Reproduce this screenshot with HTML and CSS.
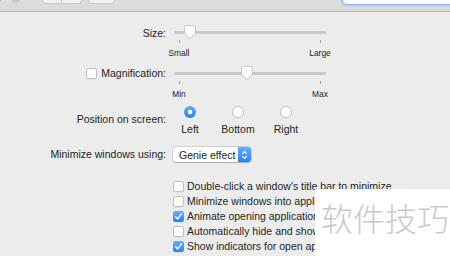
FILE: index.html
```html
<!DOCTYPE html>
<html lang="en">
<head>
    <meta charset="UTF-8">
    <title>Dock</title>
    <link rel="stylesheet" href="styles.css">
</head>
<body>
    <div class="toolbar">
        <div class="lights">
            <span class="light light-min"></span>
            <span class="light light-zoom"></span>
        </div>
        <div class="nav-group">
            <button class="tb-btn">&#8249;</button>
            <button class="tb-btn">&#8250;</button>
        </div>
        <button class="tb-btn grid-btn">
            <svg width="16" height="12" viewBox="0 0 16 12">
                <g fill="#4a4a4a">
                    <rect x="0" y="0" width="3" height="2.5"/><rect x="4.3" y="0" width="3" height="2.5"/><rect x="8.6" y="0" width="3" height="2.5"/><rect x="12.9" y="0" width="3" height="2.5"/>
                    <rect x="0" y="4.5" width="3" height="2.5"/><rect x="4.3" y="4.5" width="3" height="2.5"/><rect x="8.6" y="4.5" width="3" height="2.5"/><rect x="12.9" y="4.5" width="3" height="2.5"/>
                    <rect x="0" y="9" width="3" height="2.5"/><rect x="4.3" y="9" width="3" height="2.5"/><rect x="8.6" y="9" width="3" height="2.5"/><rect x="12.9" y="9" width="3" height="2.5"/>
                </g>
            </svg>
        </button>
        <div class="title">Dock</div>
        <div class="search">
            <svg width="9" height="9" viewBox="0 0 9 9"><circle cx="3.6" cy="3.6" r="2.8" fill="none" stroke="#777" stroke-width="1.1"/><path d="M5.6 5.6 8.3 8.3" stroke="#777" stroke-width="1.3"/></svg>
            <span class="caret"></span>
            <span class="search-text">Search</span>
        </div>
    </div>

    <div class="prefs">
        <div class="row row-size">
            <div class="row-label">Size:</div>
            <div class="slider-block">
                <div class="slider">
                    <div class="track"></div>
                    <svg class="knob" style="left: 10px" width="12" height="14" viewBox="0 0 12 14"><path d="M1.8 .6h8.4a1.2 1.2 0 0 1 1.2 1.2v6.6L6 13.4 .6 8.4V1.8a1.2 1.2 0 0 1 1.2-1.2z" fill="#fff" stroke="#b9b9b9" stroke-width=".7"/></svg>
                </div>
                <div class="scale">
                    <div class="mark"><span class="tick"></span><span class="mark-label">Small</span></div>
                    <div class="mark"><span class="tick"></span><span class="mark-label">Large</span></div>
                </div>
            </div>
        </div>

        <div class="row row-magnify">
            <div class="row-label"><span class="checkbox"></span>Magnification:</div>
            <div class="slider-block">
                <div class="slider">
                    <div class="track"></div>
                    <svg class="knob" style="left: 67px" width="12" height="14" viewBox="0 0 12 14"><path d="M1.8 .6h8.4a1.2 1.2 0 0 1 1.2 1.2v6.6L6 13.4 .6 8.4V1.8a1.2 1.2 0 0 1 1.2-1.2z" fill="#fff" stroke="#b9b9b9" stroke-width=".7"/></svg>
                </div>
                <div class="scale">
                    <div class="mark"><span class="tick"></span><span class="mark-label">Min</span></div>
                    <div class="mark"><span class="tick"></span><span class="mark-label">Max</span></div>
                </div>
            </div>
        </div>

        <div class="row row-position">
            <div class="row-label">Position on screen:</div>
            <div class="radio-group">
                <div class="radio-opt"><span class="radio selected"></span><span class="radio-label">Left</span></div>
                <div class="radio-opt"><span class="radio"></span><span class="radio-label">Bottom</span></div>
                <div class="radio-opt"><span class="radio"></span><span class="radio-label">Right</span></div>
            </div>
        </div>

        <div class="row row-minimize">
            <div class="row-label">Minimize windows using:</div>
            <div class="popup">
                <span class="popup-text">Genie effect</span>
                <span class="stepper">
                    <svg width="7" height="10" viewBox="0 0 7 10"><path d="M1.2 3.8 3.5 1.5 5.8 3.8M1.2 6.2 3.5 8.5 5.8 6.2" fill="none" stroke="#fff" stroke-width="1.1"/></svg>
                </span>
            </div>
        </div>

        <ul class="options">
            <li><span class="checkbox"></span>Double-click a window's title bar to minimize</li>
            <li><span class="checkbox"></span>Minimize windows into application icon</li>
            <li><span class="checkbox checked"></span>Animate opening applications</li>
            <li><span class="checkbox"></span>Automatically hide and show the Dock</li>
            <li><span class="checkbox checked"></span>Show indicators for open applications</li>
        </ul>
    </div>

    <div class="watermark">软件技巧</div>
</body>
</html>
```

FILE: styles.css
```css
* {
    margin: 0;
    padding: 0;
    box-sizing: border-box;
}

body {
    width: 450px;
    height: 256px;
    overflow: hidden;
    position: relative;
    background-color: #ececec;
    font-family: "Liberation Sans", Arial, sans-serif;
    font-size: 10.5px;
    color: #242424;
}

/* toolbar, cropped at the top */
.toolbar {
    height: 39px;
    margin-top: -27px;
    display: flex;
    align-items: flex-end;
    padding-bottom: 7px;
    background: linear-gradient(#e9e9e9, #d9d9d9);
    border-bottom: 1px solid #bcbcbc;
}

.lights {
    display: flex;
    gap: 7px;
    margin-left: -9px;
    margin-bottom: 2px;
}

.light {
    width: 12px;
    height: 12px;
    border-radius: 50%;
}

.light-min {
    background: #f5be4f;
    border: 1px solid #dea236;
}

.light-zoom {
    background: #d0d0d0;
    border: 1px solid #b9b9b9;
}

.nav-group {
    display: flex;
    margin-left: 20px;
}

.tb-btn {
    height: 22px;
    width: 20px;
    background: linear-gradient(#fdfdfd, #f1f1f1);
    border: 1px solid #c6c6c6;
    border-radius: 4px;
    font-family: "Liberation Sans", Arial, sans-serif;
    font-size: 16px;
    color: #4a4a4a;
}

.nav-group .tb-btn:first-child {
    border-radius: 4px 0 0 4px;
}

.nav-group .tb-btn:last-child {
    border-radius: 0 4px 4px 0;
    border-left: none;
}

.grid-btn {
    width: 27px;
    margin-left: 6px;
    display: flex;
    align-items: flex-end;
    justify-content: center;
    padding-bottom: 3px;
}

.title {
    flex: 1;
    text-align: center;
    font-size: 13px;
    line-height: 13px;
    color: #4d4d4d;
    margin-bottom: 2px;
}

.search {
    width: 112px;
    height: 22px;
    margin-right: -5px;
    display: flex;
    align-items: center;
    gap: 3px;
    padding-left: 7px;
    background: #fff;
    border-radius: 4px;
    box-shadow: 0 0 0 1px #8fb6ec, 0 0 0 2.5px #b3cff4;
}

.caret {
    width: 1px;
    height: 11px;
    background: #222;
}

.search-text {
    color: #a8a8a8;
    font-size: 12px;
}

/* preferences */
.row {
    display: flex;
}

.row-label {
    width: 166px;
    flex-shrink: 0;
    display: flex;
    justify-content: flex-end;
    align-items: center;
    gap: 4px;
    line-height: 14px;
    height: 14px;
}

.row-size {
    margin-top: 13px;
}

.row-size .row-label {
    padding-top: 1px;
}

.row-magnify {
    margin-top: 8px;
}

.slider-block {
    width: 152px;
    margin-left: 8px;
}

.slider {
    position: relative;
    height: 14px;
    padding-top: 6px;
}

.track {
    height: 3px;
    border-radius: 2px;
    background: #c9c9c9;
}

.knob {
    position: absolute;
    top: 0;
    filter: drop-shadow(0 0.5px 0.5px rgba(0, 0, 0, 0.15));
}

.scale {
    display: flex;
    justify-content: space-between;
    margin: 1px -9px 0 -10px;
}

.mark {
    width: 30px;
    display: flex;
    flex-direction: column;
    align-items: center;
}

.tick {
    width: 1px;
    height: 3px;
    background: #9c9c9c;
}

.mark-label {
    font-size: 8.4px;
    line-height: 10px;
    margin-top: 5px;
}

.checkbox {
    width: 11px;
    height: 11px;
    flex-shrink: 0;
    background: #fff;
    border: 1px solid #bdbdbd;
    border-radius: 2.5px;
    box-shadow: 0 0.5px 0.5px rgba(0, 0, 0, 0.08);
}

.checkbox.checked {
    border: none;
    background: no-repeat center / 11px 11px url("data:image/svg+xml,%3Csvg xmlns='http://www.w3.org/2000/svg' viewBox='0 0 11 11'%3E%3Cpath d='M2.6 5.8 4.6 7.9 8.5 2.9' fill='none' stroke='white' stroke-width='1.5' stroke-linecap='round' stroke-linejoin='round'/%3E%3C/svg%3E"), linear-gradient(#68b0fb, #2c80f4);
}

.row-position {
    margin-top: 7px;
}

.row-position .row-label {
    padding-top: 6px;
    height: 20px;
}

.radio-group {
    display: flex;
}

.radio-opt {
    width: 48px;
    display: flex;
    flex-direction: column;
    align-items: center;
}

.radio {
    width: 12px;
    height: 12px;
    border-radius: 50%;
    background: #fff;
    border: 1px solid #c2c2c2;
    box-shadow: 0 0.5px 0.5px rgba(0, 0, 0, 0.08);
}

.radio.selected {
    border: none;
    background: radial-gradient(circle, #fff 0 2px, transparent 2.6px), linear-gradient(#66aefb, #2d80f4);
}

.radio-label {
    line-height: 14px;
    margin-top: 4px;
}

.row-minimize {
    margin-top: 11px;
}

.row-minimize .row-label {
    height: 15px;
    line-height: 15px;
}

.popup {
    margin-left: 7px;
    width: 78px;
    height: 15px;
    display: flex;
    align-items: center;
    justify-content: space-between;
    padding-left: 6px;
    background: #fff;
    border-radius: 3px;
    box-shadow: 0 0 0 0.5px rgba(0, 0, 0, 0.2), 0 0.5px 1px rgba(0, 0, 0, 0.2);
}

.stepper {
    width: 13px;
    height: 15px;
    display: flex;
    align-items: center;
    justify-content: center;
    border-radius: 0 3px 3px 0;
    background: linear-gradient(#66aefb, #2d80f4);
}

.options {
    list-style: none;
    margin: 17px 0 0 173px;
}

.options li {
    display: flex;
    align-items: center;
    gap: 3px;
    height: 15px;
    line-height: 15px;
    white-space: nowrap;
}

/* watermark pasted over the lower right corner */
.watermark {
    position: absolute;
    left: 315px;
    top: 189px;
    right: 0;
    bottom: 0;
    background: #fff;
    padding: 12px 0 0 6px;
    font-family: "Noto Sans CJK SC", sans-serif;
    font-weight: 300;
    font-size: 32px;
    line-height: 32px;
    color: #c9c9c9;
}
```
